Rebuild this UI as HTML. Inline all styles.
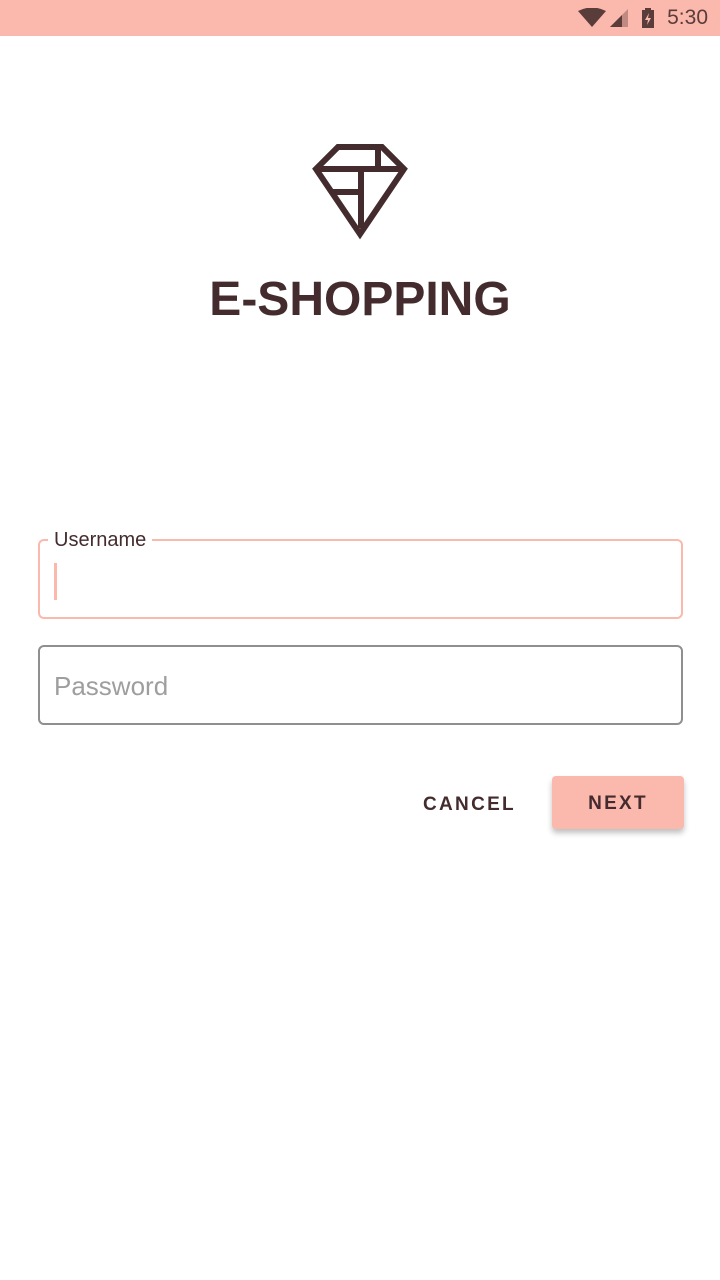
<!DOCTYPE html>
<html><head><style>
body{margin:0;width:720px;height:1280px;background:#fff;font-family:"Liberation Sans",sans-serif;position:relative;overflow:hidden}
.sb{position:absolute;top:0;left:0;width:720px;height:36px;background:#fbb8ac}
.time{position:absolute;right:12px;top:6px;font-size:21px;color:#5a3c3a}
.title{position:absolute;top:272px;left:0;width:720px;text-align:center;font-size:48px;font-weight:bold;color:#442c2e}
.f{position:absolute;left:38px;width:645px;height:80px;border-radius:6px;box-sizing:border-box}
.u{top:539px;border:2.5px solid #fbb8ac}
.p{top:645px;border:2px solid #8f8f8f}
.lbl{position:absolute;left:48px;top:529px;background:#fff;padding:0 6px;font-size:20px;color:#442c2e}
.caret{position:absolute;left:54px;top:563px;width:3px;height:37px;background:#fbb8ac}
.ph{position:absolute;left:54px;top:671px;font-size:26px;color:#9e9e9e}
.cancel{position:absolute;left:423px;top:794px;font-size:19px;font-weight:bold;letter-spacing:2.3px;color:#442c2e}
.next{position:absolute;left:552px;top:776px;width:132px;height:53px;background:#fbb8ac;border-radius:4px;box-shadow:0 4px 6px rgba(0,0,0,.25);text-align:center;line-height:56px;font-size:19px;font-weight:bold;letter-spacing:2.3px;color:#442c2e}
</style></head><body>
<div class="sb">
<svg style="position:absolute;left:578px;top:8px" width="80" height="20">
<path d="M0 3 Q14 -4 28 3 L14 19 Z" fill="#5a3c3a"/>
<path d="M32 19 L50 19 L50 1 Z" fill="#c08a82"/><path d="M32 19 L44 19 L44 7 Z" fill="#5a3c3a"/>
<rect x="64" y="2" width="12" height="18" fill="#5a3c3a"/><rect x="67" y="0" width="6" height="3" fill="#5a3c3a"/>
<path d="M71 5 L67 12 L70 12 L69 17 L73 10 L70 10 Z" fill="#fbb8ac"/>
</svg>
<div class="time">5:30</div></div>
<svg style="position:absolute;left:0;top:0" width="720" height="260">
<g fill="none" stroke="#442c2e" stroke-width="6" stroke-linejoin="miter">
<path d="M338 147 L382 147 L404 169 L360 234 L316 169 Z"/>
<path d="M316 169 L404 169"/>
<path d="M378 147 L378 169"/>
<path d="M361 169 L361 228"/>
<path d="M331 192 L361 192"/>
</g></svg>
<div class="title">E-SHOPPING</div>
<div class="f u"></div>
<div class="lbl">Username</div>
<div class="caret"></div>
<div class="f p"></div>
<div class="ph">Password</div>
<div class="cancel">CANCEL</div>
<div class="next">NEXT</div>
</body></html>
